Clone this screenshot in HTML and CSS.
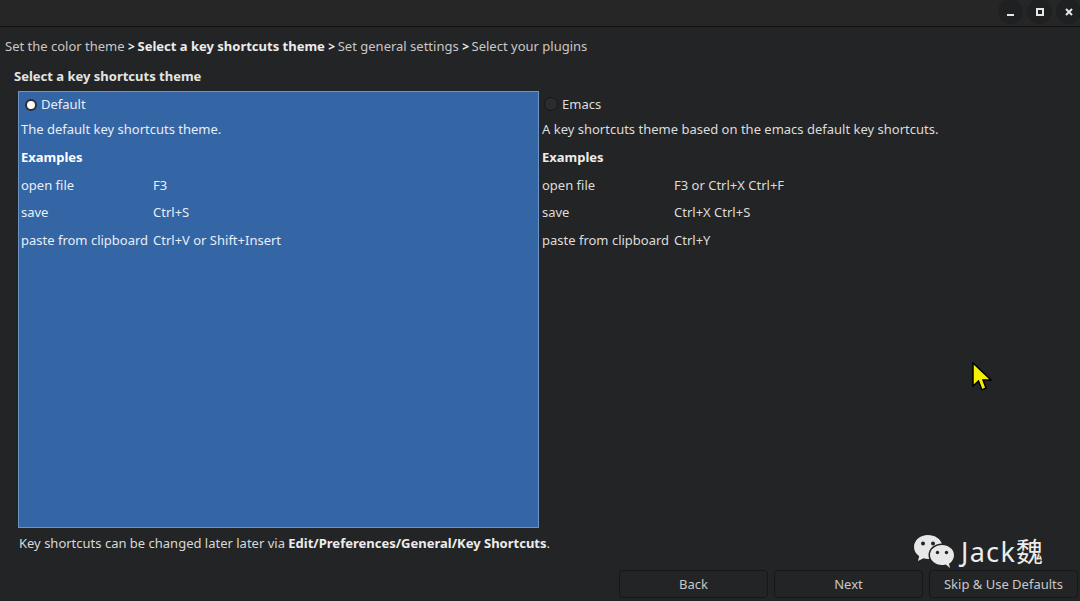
FILE: index.html
```html
<!DOCTYPE html>
<html lang="en">
<head>
<meta charset="utf-8">
<title>Welcome Wizard</title>
<link rel="stylesheet" href="styles.css">
</head>
<body>
<div class="window">
  <header class="titlebar">
    <span class="winbtn"><svg width="10" height="10" viewBox="0 0 10 10"><rect x="1" y="7" width="7" height="2" fill="#e6e6e6"/></svg></span>
    <span class="winbtn"><svg width="10" height="10" viewBox="0 0 10 10"><rect x="2" y="2" width="6" height="6" fill="none" stroke="#e6e6e6" stroke-width="2"/></svg></span>
    <span class="winbtn"><svg width="10" height="10" viewBox="0 0 10 10"><path d="M2 2l6 6M8 2l-6 6" stroke="#e6e6e6" stroke-width="2"/></svg></span>
  </header>
  <nav class="crumbs">
    <span>Set the color theme</span><b class="sep">&gt;</b><b>Select a key shortcuts theme</b><b class="sep">&gt;</b><span>Set general settings</span><b class="sep">&gt;</b><span>Select your plugins</span>
  </nav>
  <h1 class="heading">Select a key shortcuts theme</h1>
  <main class="choices">
    <section class="choice selected">
      <div class="radio-row"><span class="radio on"></span><span>Default</span></div>
      <p class="line">The default key shortcuts theme.</p>
      <p class="line"><b>Examples</b></p>
      <div class="examples">
        <span>open file</span><span>F3</span>
        <span>save</span><span>Ctrl+S</span>
        <span>paste from clipboard</span><span>Ctrl+V or Shift+Insert</span>
      </div>
    </section>
    <section class="choice">
      <div class="radio-row"><span class="radio"></span><span>Emacs</span></div>
      <p class="line">A key shortcuts theme based on the emacs default key shortcuts.</p>
      <p class="line"><b>Examples</b></p>
      <div class="examples">
        <span>open file</span><span>F3 or Ctrl+X Ctrl+F</span>
        <span>save</span><span>Ctrl+X Ctrl+S</span>
        <span>paste from clipboard</span><span>Ctrl+Y</span>
      </div>
    </section>
  </main>
  <p class="note">Key shortcuts can be changed later later via <b>Edit/Preferences/General/Key Shortcuts</b>.</p>
  <footer class="actions">
    <button class="btn">Back</button>
    <button class="btn">Next</button>
    <button class="btn">Skip &amp; Use Defaults</button>
  </footer>
</div>
<svg class="cursor" width="22" height="32" viewBox="0 0 22 32"><path d="M2 1L2 24L7.500 19L11 28L15 26L12 18L20 18Z" fill="#f4f000" stroke="#000" stroke-width="1.500"/></svg>
<div class="watermark">
  <svg width="42" height="36" viewBox="0 0 42 36"><path d="M15 1C7 1 1 6.500 1 13c0 3.800 2 7 5.200 9.200L5 27l5.500-2.800c1.500.4 3 .7 4.500.7h1.200C15.700 23.500 15.500 22 15.500 21c0-6.500 6-11.500 13.300-11.500C27 4.500 21.500 1 15 1z" fill="#e8e8e8"/><path d="M29 11c-6.600 0-12 4.400-12 10s5.400 10 12 10c1.300 0 2.600-.2 3.800-.6L37 34l-1-4.200c3-1.900 5-5 5-8.800 0-5.600-5.400-10-12-10z" fill="#e8e8e8"/><circle cx="10" cy="9.500" r="2" fill="#232425"/><circle cx="20" cy="9.500" r="2" fill="#232425"/><circle cx="24.500" cy="18.500" r="1.700" fill="#232425"/><circle cx="33.500" cy="18.500" r="1.700" fill="#232425"/></svg>
  <span>Jack魏</span>
</div>
</body>
</html>
```
FILE: styles.css
```css
* { box-sizing: border-box; }
html, body { margin: 0; height: 100%; overflow: hidden; }
body {
  background: #232425;
  color: #dcdcdc;
  font-family: "Noto Sans", "Noto Sans CJK SC", sans-serif;
  font-size: 13px;
  line-height: 19px;
}
b { font-weight: 700; color: #ececec; }
p { margin: 0; }
.window { display: flex; flex-direction: column; height: 601px; }
.titlebar {
  height: 27px;
  flex: none;
  display: flex;
  justify-content: flex-end;
  gap: 4px;
  margin-right: -1px;
  background: #262626;
  border-bottom: 1px solid #0f0f0f;
}
.winbtn {
  width: 25px;
  height: 25px;
  border-radius: 50%;
  background: #1f2021;
  display: flex;
  align-items: center;
  justify-content: center;
  margin-top: -1px;
}
.crumbs { padding: 10px 0 0 5px; height: 39px; color: #c8c8c8; white-space: nowrap; }
.sep { font-size: 12px; color: #f0f0f0; margin: 0 2.500px 0 3.500px; }
.heading { margin: 0; padding: 1px 0 0 14px; height: 25px; font-size: 13px; line-height: 19px; font-weight: 700; color: #e4e4e4; }
.choices { display: flex; height: 437px; margin-left: 18px; flex: none; }
.choice { width: 521px; padding: 0 3px; }
.selected { background: #3465a4; border: 1px solid #6d93c4; color: #e8eef6; padding: 0 1px 0 2px; }
.selected b { color: #fff; }
.radio-row { display: flex; align-items: center; gap: 4px; height: 26px; padding-left: 2px; }
.selected .radio-row { height: 25px; padding-left: 4px; }
.radio { width: 14px; height: 14px; border-radius: 50%; background: #2a2c2e; border: 1px solid #161718; }
.radio.on { width: 12px; height: 12px; background: #fff; border: 2px solid #2a2c30; }
.line { height: 27.500px; padding-top: 3px; }
.examples { display: grid; grid-template-columns: 132px 1fr; grid-auto-rows: 27.500px; padding-top: .5px; white-space: nowrap; }
.examples span { padding-top: 3px; }
.note { padding: 6px 0 0 19px; height: 42px; color: #d8d8d8; }
.actions { display: flex; justify-content: flex-end; gap: 6px; margin-right: 2px; }
.btn {
  width: 149px;
  height: 28px;
  background: #232425;
  color: #c8c8c8;
  border: 1px solid #161718;
  border-radius: 4px;
  font: inherit;
  padding: 0;
}
.cursor { position: absolute; left: 971px; top: 362px; }
.watermark { position: absolute; left: 913px; top: 534px; display: flex; align-items: center; gap: 6px; color: #ededed; font-size: 27px; line-height: 36px; letter-spacing: 1.300px; }
```
